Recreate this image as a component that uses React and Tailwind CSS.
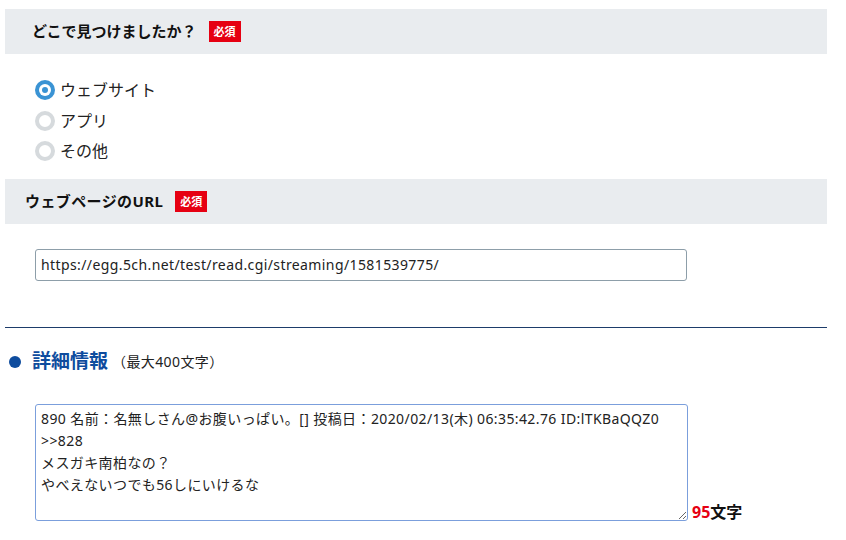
import { useState } from 'react';

const font = { fontFamily: '"Noto Sans", "Noto Sans CJK JP", sans-serif' };

function Badge() {
    return (
        <span className="ml-3 inline-flex items-center justify-center w-[32px] h-[21px] bg-[#e60012] text-white text-[11px] font-bold leading-none">
            必須
        </span>
    );
}

function SectionHead({ children, pad, track = '' }) {
    return (
        <div className={`h-[45px] bg-[#e9ecef] flex items-center ${pad}`}>
            <span className={`text-[15px] font-bold text-[#111] ${track}`}>{children}</span>
            <Badge />
        </div>
    );
}

function Radio({ checked, label, onClick }) {
    return (
        <label onClick={onClick} className="flex items-center gap-[5px] h-[30.5px] cursor-pointer">
            {checked ? (
                <span className="w-[20px] h-[20px] rounded-full bg-[#3a93d4] flex items-center justify-center">
                    <span className="w-[12px] h-[12px] rounded-full bg-white flex items-center justify-center">
                        <span className="w-[6px] h-[6px] rounded-full bg-[#3a93d4]" />
                    </span>
                </span>
            ) : (
                <span className="w-[20px] h-[20px] rounded-full border-[4px] border-[#d6dadd] bg-white" />
            )}
            <span className="text-[16px] text-[#222]">{label}</span>
        </label>
    );
}

export default function App() {
    const [source, setSource] = useState('web');
    const [detail, setDetail] = useState(
        '890 名前：名無しさん@お腹いっぱい。[] 投稿日：2020/02/13(木) 06:35:42.76 ID:lTKBaQQZ0\n>>828\nメスガキ南柏なの？\nやべえないつでも56しにいけるな'
    );

    return (
        <div style={font} className="w-[846px] h-[540px] bg-white overflow-hidden pt-[9px]">
            <div className="ml-[5px] w-[822px]">
                <SectionHead pad="pl-[27px]">どこで見つけましたか？</SectionHead>

                <div className="pl-[30px] pt-[21px] pb-[12px]">
                    <Radio checked={source === 'web'} label="ウェブサイト" onClick={() => setSource('web')} />
                    <Radio checked={source === 'app'} label="アプリ" onClick={() => setSource('app')} />
                    <Radio checked={source === 'other'} label="その他" onClick={() => setSource('other')} />
                </div>

                <SectionHead pad="pl-[20px]" track="tracking-[0.4px]">ウェブページのURL</SectionHead>

                <div className="pl-[30px] pt-[25px] pb-[46px]">
                    <input
                        type="text"
                        defaultValue="https://egg.5ch.net/test/read.cgi/streaming/1581539775/"
                        className="w-[652px] h-[32px] border border-[#8d9ea9] rounded-[3px] px-[5px] text-[14px] tracking-[0.4px] text-[#222] outline-none"
                        style={font}
                    />
                </div>

                <hr className="border-0 border-t border-[#1d3c6a]" />

                <div className="flex items-center pl-[4px] pt-[17px] h-[51px]">
                    <span className="w-[12px] h-[12px] rounded-full bg-[#0e4c9e]" />
                    <span className="ml-[11px] text-[19px] font-bold text-[#0e4c9e]">詳細情報</span>
                    <span className="ml-[4px] text-[14px] tracking-[0.4px] text-[#222]">（最大400文字）</span>
                </div>

                <div className="flex items-end pl-[30px] pt-[25px]">
                    <textarea
                        value={detail}
                        onChange={(e) => setDetail(e.target.value)}
                        spellCheck={false}
                        className="w-[653px] h-[117px] border border-[#7b9fdc] rounded-[3px] px-[5px] py-[3px] text-[14px] leading-[22px] tracking-[0.4px] text-[#222] outline-none"
                        style={font}
                    />
                    <span className="ml-[4px] text-[16px] font-bold leading-none mb-[1px]">
                        <span className="text-[#e60012]">95</span>
                        <span className="text-[#111]">文字</span>
                    </span>
                </div>
            </div>
        </div>
    );
}
